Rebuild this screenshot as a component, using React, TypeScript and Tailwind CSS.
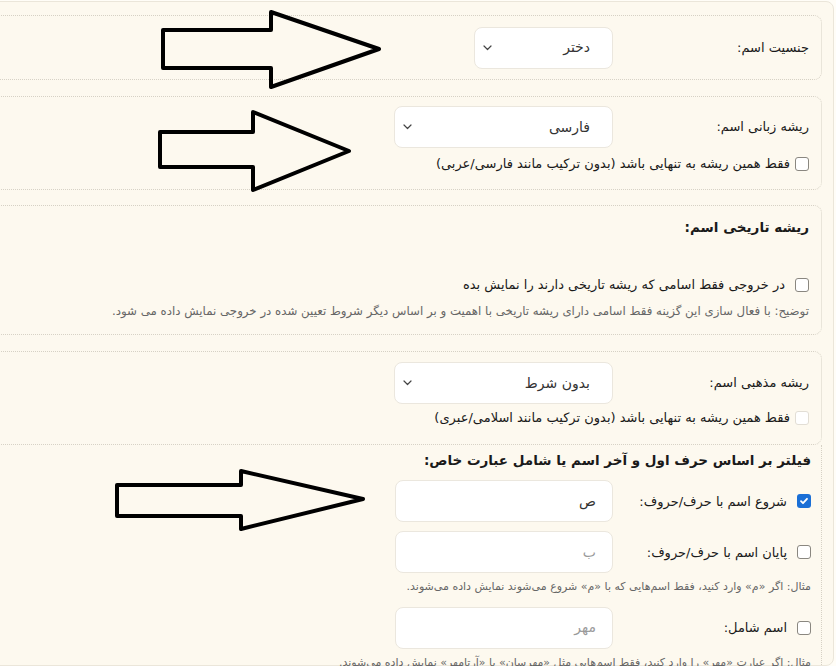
import React from 'react';

function Chevron() {
  return (
    <svg width="9" height="6" viewBox="0 0 9 6" className="shrink-0">
      <path d="M1 1l3.5 3.5L8 1" fill="none" stroke="#444" strokeWidth="1.2" strokeLinecap="round" strokeLinejoin="round" />
    </svg>
  );
}

function Select({ value, wide = true }: { value: string; wide?: boolean }) {
  return (
    <div
      className={`${wide ? 'w-[219px]' : 'w-[139px]'} h-[42px] bg-white border border-[#ebe7de] rounded-lg flex items-center justify-between pr-[22px] pl-[8px] text-[14px] text-[#333]`}
    >
      <span>{value}</span>
      <Chevron />
    </div>
  );
}

function TextInput({ value, placeholder }: { value?: string; placeholder: string }) {
  return (
    <div className="w-[218px] h-[42px] bg-white border border-[#ebe7de] rounded-lg flex items-center pr-[16px] text-[14px]">
      {value ? <span className="text-[#333]">{value}</span> : <span className="text-[#9a9a9a]">{placeholder}</span>}
    </div>
  );
}

function Checkbox({ checked = false, disabled = false }: { checked?: boolean; disabled?: boolean }) {
  if (checked) {
    return (
      <div className="w-[14px] h-[14px] rounded-[3px] bg-[#1a6fd6] flex items-center justify-center shrink-0">
        <svg width="10" height="10" viewBox="0 0 10 10">
          <path d="M2 5.2l2 2L8 2.8" fill="none" stroke="white" strokeWidth="1.8" strokeLinecap="round" strokeLinejoin="round" />
        </svg>
      </div>
    );
  }
  return (
    <div
      className={`w-[14px] h-[14px] rounded-[3px] bg-white border shrink-0 ${disabled ? 'border-[#e2ded5]' : 'border-[#8a8780]'}`}
    />
  );
}

function Card({ children, className = '' }: { children: React.ReactNode; className?: string }) {
  return (
    <div className={`border border-dotted border-[#d6d1c5] rounded-lg pr-[12px] pl-4 ${className}`}>{children}</div>
  );
}

function Arrows() {
  const arrows = [
    '163,30 271,30 271,12 379,49 271,87 271,68 163,68',
    '160,132 253,132 253,112 349,151 253,190 253,167 160,167',
    '117,485 241,485 241,471 363,499 241,529 241,516 117,516',
  ];
  return (
    <svg className="absolute inset-0 pointer-events-none" width="836" height="666" viewBox="0 0 836 666">
      {arrows.map((p) => (
        <polygon key={p} points={p} fill="none" stroke="#000" strokeWidth="4" strokeLinejoin="round" />
      ))}
    </svg>
  );
}

export default function App() {
  return (
    <div
      dir="rtl"
      className="relative w-[836px] h-[666px] overflow-hidden bg-[#fffdf7] flex justify-start font-['DejaVu_Sans',sans-serif] text-[#1a1a1a]"
    >
      <div className="mr-[2px] mt-[1px] w-[880px] shrink-0 border border-[#ebe6da] rounded-lg bg-[#fdf9ef] pt-[13px] pr-[11px] pl-4">
        {/* gender */}
        <Card className="h-[65px] flex items-center">
          <div className="w-[196px] text-[13px]">جنسیت اسم:</div>
          <Select value="دختر" wide={false} />
        </Card>

        {/* language root */}
        <Card className="mt-[16px] h-[94px] pt-[9px]">
          <div className="flex items-center">
            <div className="w-[196px] text-[13px]">ریشه زبانی اسم:</div>
            <Select value="فارسی" />
          </div>
          <div className="flex items-center gap-[5px] mt-[6px] text-[13px]">
            <Checkbox />
            <span>فقط همین ریشه به تنهایی باشد (بدون ترکیب مانند فارسی/عربی)</span>
          </div>
        </Card>

        {/* historical root */}
        <Card className="mt-[15px] h-[130px] pt-[11px]">
          <div className="text-[13.5px] font-bold">ریشه تاریخی اسم:</div>
          <div className="flex items-center gap-[10px] mt-[38px] text-[13px]">
            <Checkbox />
            <span>در خروجی فقط اسامی که ریشه تاریخی دارند را نمایش بده</span>
          </div>
          <div className="mt-[8px] text-[11.8px] text-[#666]">
            توضیح: با فعال سازی این گزینه فقط اسامی دارای ریشه تاریخی با اهمیت و بر اساس دیگر شروط تعیین شده در خروجی نمایش داده می شود.
          </div>
        </Card>

        {/* religious root */}
        <Card className="mt-[16px] h-[94px] pt-[10px]">
          <div className="flex items-center">
            <div className="w-[196px] text-[13px]">ریشه مذهبی اسم:</div>
            <Select value="بدون شرط" />
          </div>
          <div className="flex items-center gap-[5px] mt-[4px] text-[13px]">
            <Checkbox disabled />
            <span>فقط همین ریشه به تنهایی باشد (بدون ترکیب مانند اسلامی/عبری)</span>
          </div>
        </Card>

        {/* letter filter */}
        <div className="border-r border-l border-dotted border-[#d6d1c5] pr-[10px] pl-4 pt-[5px] pb-6">
          <div className="text-[13.5px] font-bold">فیلتر بر اساس حرف اول و آخر اسم یا شامل عبارت خاص:</div>

          <div className="flex items-center mt-[10px]">
            <div className="w-[198px] flex items-center gap-[10px] text-[13px]">
              <Checkbox checked />
              <span>شروع اسم با حرف/حروف:</span>
            </div>
            <TextInput value="ص" placeholder="" />
          </div>

          <div className="flex items-center mt-[9px]">
            <div className="w-[198px] flex items-center gap-[10px] text-[13px]">
              <Checkbox />
              <span>پایان اسم با حرف/حروف:</span>
            </div>
            <TextInput placeholder="ب" />
          </div>

          <div className="mt-[6px] text-[11px] text-[#666]">
            مثال: اگر «م» وارد کنید، فقط اسم‌هایی که با «م» شروع می‌شوند نمایش داده می‌شوند.
          </div>

          <div className="flex items-center mt-[11px]">
            <div className="w-[198px] flex items-center gap-[10px] text-[13px]">
              <Checkbox />
              <span>اسم شامل:</span>
            </div>
            <TextInput placeholder="مهر" />
          </div>

          <div className="mt-[6px] text-[11px] text-[#666]">
            مثال: اگر عبارت «مهر» را وارد کنید، فقط اسم‌هایی مثل «مهرسان» یا «آرتامهر» نمایش داده می‌شوند.
          </div>
        </div>
      </div>
      <Arrows />
    </div>
  );
}
